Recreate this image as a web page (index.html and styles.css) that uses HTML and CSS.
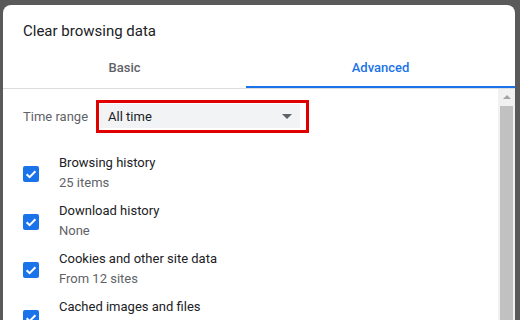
FILE: index.html
```html
<!DOCTYPE html>
<html lang="en">
  <head>
    <meta charset="UTF-8" />
    <meta name="viewport" content="width=device-width, initial-scale=1.0" />
    <title>Clear browsing data</title>
    <link rel="stylesheet" href="styles.css">
  </head>
  <body>
    <div class="dialog">
      <h1 class="title">Clear browsing data</h1>
      <nav class="tabs">
        <button class="tab">Basic</button>
        <button class="tab valgt">Advanced</button>
      </nav>
      <div class="body">
        <main class="content">
          <div class="range">
            <span class="range-label">Time range</span>
            <div class="markering">
              <div class="select">
                <span>All time</span>
                <span class="arrow"></span>
              </div>
            </div>
          </div>

          <div class="row">
            <span class="check"><svg width="16" height="16" viewBox="0 0 16 16"><polyline points="3.6,8.2 6.6,11.1 12.4,5.2" /></svg></span>
            <div class="label">
              <p class="navn">Browsing history</p>
              <p class="info">25 items</p>
            </div>
          </div>
          <div class="row">
            <span class="check"><svg width="16" height="16" viewBox="0 0 16 16"><polyline points="3.6,8.2 6.6,11.1 12.4,5.2" /></svg></span>
            <div class="label">
              <p class="navn">Download history</p>
              <p class="info">None</p>
            </div>
          </div>
          <div class="row">
            <span class="check"><svg width="16" height="16" viewBox="0 0 16 16"><polyline points="3.6,8.2 6.6,11.1 12.4,5.2" /></svg></span>
            <div class="label">
              <p class="navn">Cookies and other site data</p>
              <p class="info">From 12 sites</p>
            </div>
          </div>
          <div class="row">
            <span class="check"><svg width="16" height="16" viewBox="0 0 16 16"><polyline points="3.6,8.2 6.6,11.1 12.4,5.2" /></svg></span>
            <div class="label">
              <p class="navn">Cached images and files</p>
              <p class="info">Less than 319 MB</p>
            </div>
          </div>
        </main>
        <!-- scrollbar -->
        <div class="scroll">
          <span class="scroll-up"></span>
          <span class="thumb"></span>
        </div>
      </div>
    </div>
  </body>
</html>
```

FILE: styles.css
```css
      body {
        margin: 0;
        height: 320px;
        overflow: hidden;
        background-color: #5a5a5a;
        font-family: Roboto, "Liberation Sans", sans-serif;
      }

      .dialog {
        margin: 5px 5px 0 3px;
        height: 330px;
        background-color: white;
        border-radius: 8px 8px 0 0;
        display: flex;
        flex-direction: column;
        overflow: hidden;
      }

      .title {
        margin: 0;
        padding: 16px 20px 0 20px;
        font-size: 15px;
        font-weight: 400;
        line-height: 20px;
        color: #202124;
      }

      .tabs {
        display: flex;
        margin-top: 6px;
        border-bottom: 1px solid #dadce0;
      }

      .tab {
        flex: 1;
        border: none;
        background-color: white;
        padding: 2px 0 0 0;
        line-height: 37px;
        border-bottom: 2px solid transparent;
        font-family: Roboto, "Liberation Sans", sans-serif;
        font-size: 13px;
        font-weight: 500;
        color: #5f6368;
        cursor: pointer;
      }

      .tab:first-child {
        flex: 0 0 243px;
      }

      .valgt {
        color: #1a73e8;
        border-bottom-color: #1a73e8;
      }

      .body {
        flex: 1;
        display: flex;
      }

      .content {
        flex: 1;
        padding: 11px 20px 0 20px;
      }

      .range {
        display: flex;
        align-items: center;
        gap: 8px;
      }

      .range-label {
        font-size: 13px;
        color: #5f6368;
      }

      .markering {
        border: 3px solid #e00000;
        padding: 1px 6px 2px 1px;
      }

      .select {
        width: 184px;
        height: 24px;
        padding: 0 8px;
        background-color: #f1f3f4;
        display: flex;
        align-items: center;
        justify-content: space-between;
        font-size: 13px;
        color: #202124;
      }

      .arrow {
        width: 0;
        height: 0;
        border-left: 5px solid transparent;
        border-right: 5px solid transparent;
        border-top: 5px solid #5f6368;
      }

      .range + .row {
        margin-top: 16px;
      }

      .row {
        display: flex;
        align-items: center;
        gap: 20px;
        padding: 4px 0;
      }

      .check {
        width: 16px;
        height: 16px;
        border-radius: 2px;
        background-color: #1a73e8;
        display: flex;
        margin-top: 2px;
      }

      .check polyline {
        fill: none;
        stroke: white;
        stroke-width: 2;
      }

      .label p {
        margin: 0;
        font-size: 13px;
        line-height: 20px;
      }

      .navn {
        color: #202124;
      }

      .info {
        color: #5f6368;
      }

      .scroll {
        width: 17px;
        background-color: #f1f1f1;
        display: flex;
        flex-direction: column;
        align-items: center;
      }

      .scroll-up {
        margin-top: 6px;
        width: 0;
        height: 0;
        border-left: 4px solid transparent;
        border-right: 4px solid transparent;
        border-bottom: 4px solid #a3a3a3;
      }

      .thumb {
        margin-top: 7px;
        width: 13px;
        flex: 1;
        background-color: #c1c1c1;
      }
```
